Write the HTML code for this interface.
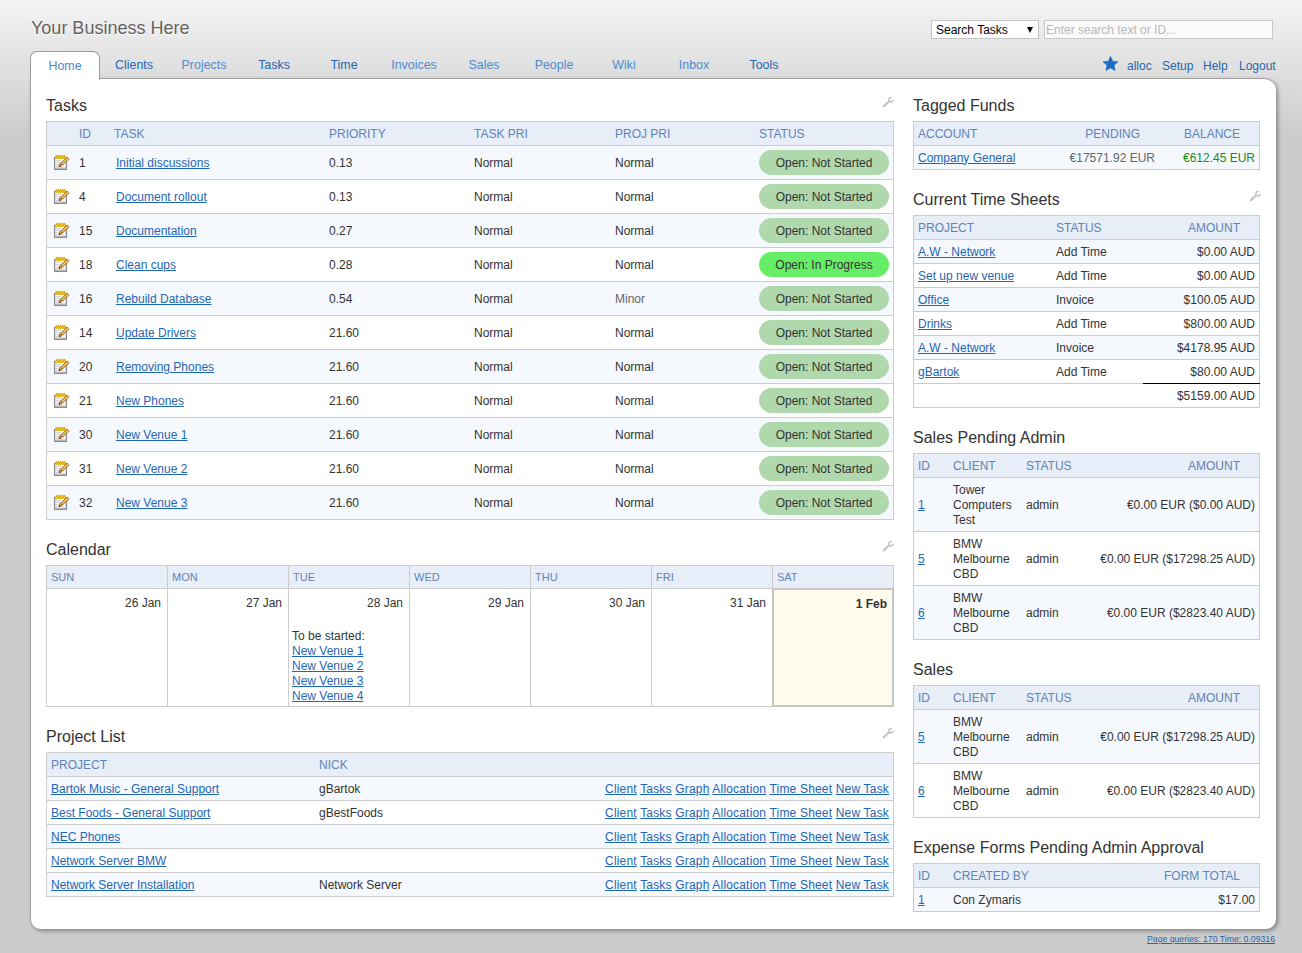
<!DOCTYPE html><html><head><meta charset="utf-8"><title>allocPSA</title><style>
*{box-sizing:border-box}
html,body{margin:0;padding:0}
body{width:1302px;height:953px;overflow:hidden;position:relative;font-family:"Liberation Sans",sans-serif;font-size:12px;color:#333;
background:linear-gradient(to bottom,#f4f4f4 0px,#cccccc 135px,#cccccc 953px);}
a{color:#1f66b5}
.abs{position:absolute}
#biz{position:absolute;left:31px;top:17px;font-size:18px;line-height:22px;color:#626262;white-space:nowrap;text-shadow:0 1px 1px #fff}
#sel{position:absolute;left:931px;top:20px;width:108px;height:19px;background:#fff;border:1px solid #c4c4c4;font-size:12px;line-height:19px;padding-left:4px;color:#000}
#sel .arr{position:absolute;left:95px;top:6px;width:0;height:0;border-left:3px solid transparent;border-right:3px solid transparent;border-top:6px solid #000}
#srch{position:absolute;left:1044px;top:20px;width:229px;height:19px;background:#fafafa;border:1px solid #c8c8c8;font-size:12px;line-height:19px;padding-left:1px;color:#b8b8b8;white-space:nowrap}
.tab{position:absolute;top:51px;width:70px;height:28px;text-align:center;font-size:12.4px;line-height:15px;padding-top:7px;white-space:nowrap}
.tab.dk{color:#2366b3}
.tab.lt{color:#4f8bce}
#home{left:30px;top:51px;width:70px;height:29px;background:#fff;border:1px solid #9a9a9a;border-bottom:none;border-radius:7px 7px 0 0;z-index:3;color:#4a86c8;padding-top:7px}
#box{position:absolute;left:30px;top:78px;width:1246px;height:851px;background:#fff;border-left:1px solid #a0a0a0;border-top:1px solid #a0a0a0;border-radius:0 12px 10px 10px;box-shadow:2px 2px 4px rgba(0,0,0,0.36);z-index:2}
#links{position:absolute;top:57px;left:1100px;font-size:12px;line-height:15px;white-space:nowrap}
#links span{position:absolute;color:#2a6ab5}
.ttl{position:absolute;font-size:16px;line-height:20px;color:#333;white-space:nowrap;z-index:4}
.wr{position:absolute;width:13px;height:13px;z-index:4}
.tbl{position:absolute;border:1px solid #cccccc;z-index:4;background:#fff}
.hd{position:relative;height:24px;background:#e7eef8;border-bottom:1px solid #cccccc}
.r{position:relative;border-bottom:1px solid #cccccc;background:#fff}
.r.o{background:#f5f9fe}
.r:last-child{border-bottom:none}
.c{position:absolute;top:1px;bottom:0;display:flex;align-items:center;white-space:nowrap;line-height:15px}
.hd .c{color:#5f84b6;font-size:12px}
.rt{justify-content:flex-end}
.pill{width:130px;height:25px;border-radius:12.5px;background:#afd8ad;color:#333;text-align:center;line-height:26px;font-size:12px;margin-top:-2px}
.pill.ip{background:#66ee66}
</style></head><body>
<div id="biz">Your Business Here</div>
<div id="sel">Search Tasks<span class="arr"></span></div>
<div id="srch">Enter search text or ID...</div>
<div id="home" class="tab">Home</div>
<div class="tab dk" style="left:99px">Clients</div>
<div class="tab lt" style="left:169px">Projects</div>
<div class="tab dk" style="left:239px">Tasks</div>
<div class="tab dk" style="left:309px">Time</div>
<div class="tab lt" style="left:379px">Invoices</div>
<div class="tab lt" style="left:449px">Sales</div>
<div class="tab lt" style="left:519px">People</div>
<div class="tab lt" style="left:589px">Wiki</div>
<div class="tab lt" style="left:659px">Inbox</div>
<div class="tab dk" style="left:729px">Tools</div>
<svg class="abs" style="left:1103px;top:56px" width="16" height="16" viewBox="0 0 16 16"><path d="M7.50 0.30 L9.67 5.21 L15.01 5.76 L11.02 9.34 L12.14 14.59 L7.50 11.90 L2.86 14.59 L3.98 9.34 L-0.01 5.76 L5.33 5.21Z" fill="#1a6cc4" stroke="#1a6cc4" stroke-width="0.6" stroke-linejoin="round"/></svg>
<span class="abs" style="left:1127px;top:59px;font-size:12px;line-height:15px;color:#2366b3">alloc</span>
<span class="abs" style="left:1162px;top:59px;font-size:12px;line-height:15px;color:#2366b3">Setup</span>
<span class="abs" style="left:1203px;top:59px;font-size:12px;line-height:15px;color:#2366b3">Help</span>
<span class="abs" style="left:1239px;top:59px;font-size:12px;line-height:15px;color:#2366b3">Logout</span>
<div id="box"></div>
<div class="ttl" style="left:46px;top:95.5px">Tasks</div>
<div class="wr" style="left:882px;top:96px"><svg width="13" height="13" viewBox="0 0 13 13"><path d="M1.7 10.3 L6.9 5.5" stroke="#c6c6c6" stroke-width="2.3" stroke-linecap="round"/><path d="M11.19 3.89 A2.2 2.2 0 1 1 9.93 1.71" stroke="#c6c6c6" stroke-width="1.6" fill="none"/></svg></div>
<div class="tbl" style="left:46px;top:121px;width:848px">
<div class="hd" style="height:24px">
<div class="c" style="left:32px;">ID</div>
<div class="c" style="left:67px;">TASK</div>
<div class="c" style="left:282px;">PRIORITY</div>
<div class="c" style="left:427px;">TASK PRI</div>
<div class="c" style="left:568px;">PROJ PRI</div>
<div class="c" style="left:712px;">STATUS</div>
</div>
<div class="r o" style="height:34px">
<div class="c" style="left:5px;display:block;width:20px"><div style="position:absolute;left:0;top:5px;width:20px;height:20px"><svg width="20" height="20" viewBox="0 0 20 20" style="position:absolute;left:0;top:0"><rect x="2.6" y="5.6" width="11.8" height="11.8" fill="#f6f6f6" stroke="#8c8c8c" stroke-width="1.3"/><rect x="3.3" y="15.6" width="10.4" height="1.2" fill="#b0b0b0"/><path d="M4 8.5h5M4 10.5h5M4 12.5h4M4 14.5h3" stroke="#cfcfcf" stroke-width="0.9"/><g fill="#dcae06"><ellipse cx="4.4" cy="4.9" rx="1.1" ry="2.1"/><ellipse cx="6.4" cy="4.9" rx="1.1" ry="2.1"/><ellipse cx="8.4" cy="4.9" rx="1.1" ry="2.1"/><ellipse cx="10.5" cy="4.9" rx="1.1" ry="2.1"/><ellipse cx="12.5" cy="4.9" rx="1.1" ry="2.1"/></g><g fill="#f3c870"><circle cx="4.4" cy="5.2" r="0.5"/><circle cx="6.4" cy="5.2" r="0.5"/><circle cx="8.4" cy="5.2" r="0.5"/><circle cx="10.5" cy="5.2" r="0.5"/><circle cx="12.5" cy="5.2" r="0.5"/></g><path d="M9.0 12.7 L16.4 5.8" stroke="#ad680a" stroke-width="3.1" stroke-linecap="butt"/><path d="M9.6 12.1 L16.0 6.2" stroke="#f3e0b2" stroke-width="1.2"/><path d="M10.06 13.83 L7.1 14.5 L7.94 11.57 Z" fill="#d9b070" stroke="#9a5a08" stroke-width="0.6" stroke-linejoin="round"/><circle cx="7.6" cy="14.0" r="0.8" fill="#111"/></svg></div></div>
<div class="c" style="left:32px;">1</div>
<div class="c" style="left:69px;"><a href="#">Initial discussions</a></div>
<div class="c" style="left:282px;">0.13</div>
<div class="c" style="left:427px;">Normal</div>
<div class="c" style="left:568px;">Normal</div>
<div class="c" style="left:712px;"><div class="pill">Open: Not Started</div></div>
</div>
<div class="r" style="height:34px">
<div class="c" style="left:5px;display:block;width:20px"><div style="position:absolute;left:0;top:5px;width:20px;height:20px"><svg width="20" height="20" viewBox="0 0 20 20" style="position:absolute;left:0;top:0"><rect x="2.6" y="5.6" width="11.8" height="11.8" fill="#f6f6f6" stroke="#8c8c8c" stroke-width="1.3"/><rect x="3.3" y="15.6" width="10.4" height="1.2" fill="#b0b0b0"/><path d="M4 8.5h5M4 10.5h5M4 12.5h4M4 14.5h3" stroke="#cfcfcf" stroke-width="0.9"/><g fill="#dcae06"><ellipse cx="4.4" cy="4.9" rx="1.1" ry="2.1"/><ellipse cx="6.4" cy="4.9" rx="1.1" ry="2.1"/><ellipse cx="8.4" cy="4.9" rx="1.1" ry="2.1"/><ellipse cx="10.5" cy="4.9" rx="1.1" ry="2.1"/><ellipse cx="12.5" cy="4.9" rx="1.1" ry="2.1"/></g><g fill="#f3c870"><circle cx="4.4" cy="5.2" r="0.5"/><circle cx="6.4" cy="5.2" r="0.5"/><circle cx="8.4" cy="5.2" r="0.5"/><circle cx="10.5" cy="5.2" r="0.5"/><circle cx="12.5" cy="5.2" r="0.5"/></g><path d="M9.0 12.7 L16.4 5.8" stroke="#ad680a" stroke-width="3.1" stroke-linecap="butt"/><path d="M9.6 12.1 L16.0 6.2" stroke="#f3e0b2" stroke-width="1.2"/><path d="M10.06 13.83 L7.1 14.5 L7.94 11.57 Z" fill="#d9b070" stroke="#9a5a08" stroke-width="0.6" stroke-linejoin="round"/><circle cx="7.6" cy="14.0" r="0.8" fill="#111"/></svg></div></div>
<div class="c" style="left:32px;">4</div>
<div class="c" style="left:69px;"><a href="#">Document rollout</a></div>
<div class="c" style="left:282px;">0.13</div>
<div class="c" style="left:427px;">Normal</div>
<div class="c" style="left:568px;">Normal</div>
<div class="c" style="left:712px;"><div class="pill">Open: Not Started</div></div>
</div>
<div class="r o" style="height:34px">
<div class="c" style="left:5px;display:block;width:20px"><div style="position:absolute;left:0;top:5px;width:20px;height:20px"><svg width="20" height="20" viewBox="0 0 20 20" style="position:absolute;left:0;top:0"><rect x="2.6" y="5.6" width="11.8" height="11.8" fill="#f6f6f6" stroke="#8c8c8c" stroke-width="1.3"/><rect x="3.3" y="15.6" width="10.4" height="1.2" fill="#b0b0b0"/><path d="M4 8.5h5M4 10.5h5M4 12.5h4M4 14.5h3" stroke="#cfcfcf" stroke-width="0.9"/><g fill="#dcae06"><ellipse cx="4.4" cy="4.9" rx="1.1" ry="2.1"/><ellipse cx="6.4" cy="4.9" rx="1.1" ry="2.1"/><ellipse cx="8.4" cy="4.9" rx="1.1" ry="2.1"/><ellipse cx="10.5" cy="4.9" rx="1.1" ry="2.1"/><ellipse cx="12.5" cy="4.9" rx="1.1" ry="2.1"/></g><g fill="#f3c870"><circle cx="4.4" cy="5.2" r="0.5"/><circle cx="6.4" cy="5.2" r="0.5"/><circle cx="8.4" cy="5.2" r="0.5"/><circle cx="10.5" cy="5.2" r="0.5"/><circle cx="12.5" cy="5.2" r="0.5"/></g><path d="M9.0 12.7 L16.4 5.8" stroke="#ad680a" stroke-width="3.1" stroke-linecap="butt"/><path d="M9.6 12.1 L16.0 6.2" stroke="#f3e0b2" stroke-width="1.2"/><path d="M10.06 13.83 L7.1 14.5 L7.94 11.57 Z" fill="#d9b070" stroke="#9a5a08" stroke-width="0.6" stroke-linejoin="round"/><circle cx="7.6" cy="14.0" r="0.8" fill="#111"/></svg></div></div>
<div class="c" style="left:32px;">15</div>
<div class="c" style="left:69px;"><a href="#">Documentation</a></div>
<div class="c" style="left:282px;">0.27</div>
<div class="c" style="left:427px;">Normal</div>
<div class="c" style="left:568px;">Normal</div>
<div class="c" style="left:712px;"><div class="pill">Open: Not Started</div></div>
</div>
<div class="r" style="height:34px">
<div class="c" style="left:5px;display:block;width:20px"><div style="position:absolute;left:0;top:5px;width:20px;height:20px"><svg width="20" height="20" viewBox="0 0 20 20" style="position:absolute;left:0;top:0"><rect x="2.6" y="5.6" width="11.8" height="11.8" fill="#f6f6f6" stroke="#8c8c8c" stroke-width="1.3"/><rect x="3.3" y="15.6" width="10.4" height="1.2" fill="#b0b0b0"/><path d="M4 8.5h5M4 10.5h5M4 12.5h4M4 14.5h3" stroke="#cfcfcf" stroke-width="0.9"/><g fill="#dcae06"><ellipse cx="4.4" cy="4.9" rx="1.1" ry="2.1"/><ellipse cx="6.4" cy="4.9" rx="1.1" ry="2.1"/><ellipse cx="8.4" cy="4.9" rx="1.1" ry="2.1"/><ellipse cx="10.5" cy="4.9" rx="1.1" ry="2.1"/><ellipse cx="12.5" cy="4.9" rx="1.1" ry="2.1"/></g><g fill="#f3c870"><circle cx="4.4" cy="5.2" r="0.5"/><circle cx="6.4" cy="5.2" r="0.5"/><circle cx="8.4" cy="5.2" r="0.5"/><circle cx="10.5" cy="5.2" r="0.5"/><circle cx="12.5" cy="5.2" r="0.5"/></g><path d="M9.0 12.7 L16.4 5.8" stroke="#ad680a" stroke-width="3.1" stroke-linecap="butt"/><path d="M9.6 12.1 L16.0 6.2" stroke="#f3e0b2" stroke-width="1.2"/><path d="M10.06 13.83 L7.1 14.5 L7.94 11.57 Z" fill="#d9b070" stroke="#9a5a08" stroke-width="0.6" stroke-linejoin="round"/><circle cx="7.6" cy="14.0" r="0.8" fill="#111"/></svg></div></div>
<div class="c" style="left:32px;">18</div>
<div class="c" style="left:69px;"><a href="#">Clean cups</a></div>
<div class="c" style="left:282px;">0.28</div>
<div class="c" style="left:427px;">Normal</div>
<div class="c" style="left:568px;">Normal</div>
<div class="c" style="left:712px;"><div class="pill ip">Open: In Progress</div></div>
</div>
<div class="r o" style="height:34px">
<div class="c" style="left:5px;display:block;width:20px"><div style="position:absolute;left:0;top:5px;width:20px;height:20px"><svg width="20" height="20" viewBox="0 0 20 20" style="position:absolute;left:0;top:0"><rect x="2.6" y="5.6" width="11.8" height="11.8" fill="#f6f6f6" stroke="#8c8c8c" stroke-width="1.3"/><rect x="3.3" y="15.6" width="10.4" height="1.2" fill="#b0b0b0"/><path d="M4 8.5h5M4 10.5h5M4 12.5h4M4 14.5h3" stroke="#cfcfcf" stroke-width="0.9"/><g fill="#dcae06"><ellipse cx="4.4" cy="4.9" rx="1.1" ry="2.1"/><ellipse cx="6.4" cy="4.9" rx="1.1" ry="2.1"/><ellipse cx="8.4" cy="4.9" rx="1.1" ry="2.1"/><ellipse cx="10.5" cy="4.9" rx="1.1" ry="2.1"/><ellipse cx="12.5" cy="4.9" rx="1.1" ry="2.1"/></g><g fill="#f3c870"><circle cx="4.4" cy="5.2" r="0.5"/><circle cx="6.4" cy="5.2" r="0.5"/><circle cx="8.4" cy="5.2" r="0.5"/><circle cx="10.5" cy="5.2" r="0.5"/><circle cx="12.5" cy="5.2" r="0.5"/></g><path d="M9.0 12.7 L16.4 5.8" stroke="#ad680a" stroke-width="3.1" stroke-linecap="butt"/><path d="M9.6 12.1 L16.0 6.2" stroke="#f3e0b2" stroke-width="1.2"/><path d="M10.06 13.83 L7.1 14.5 L7.94 11.57 Z" fill="#d9b070" stroke="#9a5a08" stroke-width="0.6" stroke-linejoin="round"/><circle cx="7.6" cy="14.0" r="0.8" fill="#111"/></svg></div></div>
<div class="c" style="left:32px;">16</div>
<div class="c" style="left:69px;"><a href="#">Rebuild Database</a></div>
<div class="c" style="left:282px;">0.54</div>
<div class="c" style="left:427px;">Normal</div>
<div class="c" style="left:568px;color:#666">Minor</div>
<div class="c" style="left:712px;"><div class="pill">Open: Not Started</div></div>
</div>
<div class="r" style="height:34px">
<div class="c" style="left:5px;display:block;width:20px"><div style="position:absolute;left:0;top:5px;width:20px;height:20px"><svg width="20" height="20" viewBox="0 0 20 20" style="position:absolute;left:0;top:0"><rect x="2.6" y="5.6" width="11.8" height="11.8" fill="#f6f6f6" stroke="#8c8c8c" stroke-width="1.3"/><rect x="3.3" y="15.6" width="10.4" height="1.2" fill="#b0b0b0"/><path d="M4 8.5h5M4 10.5h5M4 12.5h4M4 14.5h3" stroke="#cfcfcf" stroke-width="0.9"/><g fill="#dcae06"><ellipse cx="4.4" cy="4.9" rx="1.1" ry="2.1"/><ellipse cx="6.4" cy="4.9" rx="1.1" ry="2.1"/><ellipse cx="8.4" cy="4.9" rx="1.1" ry="2.1"/><ellipse cx="10.5" cy="4.9" rx="1.1" ry="2.1"/><ellipse cx="12.5" cy="4.9" rx="1.1" ry="2.1"/></g><g fill="#f3c870"><circle cx="4.4" cy="5.2" r="0.5"/><circle cx="6.4" cy="5.2" r="0.5"/><circle cx="8.4" cy="5.2" r="0.5"/><circle cx="10.5" cy="5.2" r="0.5"/><circle cx="12.5" cy="5.2" r="0.5"/></g><path d="M9.0 12.7 L16.4 5.8" stroke="#ad680a" stroke-width="3.1" stroke-linecap="butt"/><path d="M9.6 12.1 L16.0 6.2" stroke="#f3e0b2" stroke-width="1.2"/><path d="M10.06 13.83 L7.1 14.5 L7.94 11.57 Z" fill="#d9b070" stroke="#9a5a08" stroke-width="0.6" stroke-linejoin="round"/><circle cx="7.6" cy="14.0" r="0.8" fill="#111"/></svg></div></div>
<div class="c" style="left:32px;">14</div>
<div class="c" style="left:69px;"><a href="#">Update Drivers</a></div>
<div class="c" style="left:282px;">21.60</div>
<div class="c" style="left:427px;">Normal</div>
<div class="c" style="left:568px;">Normal</div>
<div class="c" style="left:712px;"><div class="pill">Open: Not Started</div></div>
</div>
<div class="r o" style="height:34px">
<div class="c" style="left:5px;display:block;width:20px"><div style="position:absolute;left:0;top:5px;width:20px;height:20px"><svg width="20" height="20" viewBox="0 0 20 20" style="position:absolute;left:0;top:0"><rect x="2.6" y="5.6" width="11.8" height="11.8" fill="#f6f6f6" stroke="#8c8c8c" stroke-width="1.3"/><rect x="3.3" y="15.6" width="10.4" height="1.2" fill="#b0b0b0"/><path d="M4 8.5h5M4 10.5h5M4 12.5h4M4 14.5h3" stroke="#cfcfcf" stroke-width="0.9"/><g fill="#dcae06"><ellipse cx="4.4" cy="4.9" rx="1.1" ry="2.1"/><ellipse cx="6.4" cy="4.9" rx="1.1" ry="2.1"/><ellipse cx="8.4" cy="4.9" rx="1.1" ry="2.1"/><ellipse cx="10.5" cy="4.9" rx="1.1" ry="2.1"/><ellipse cx="12.5" cy="4.9" rx="1.1" ry="2.1"/></g><g fill="#f3c870"><circle cx="4.4" cy="5.2" r="0.5"/><circle cx="6.4" cy="5.2" r="0.5"/><circle cx="8.4" cy="5.2" r="0.5"/><circle cx="10.5" cy="5.2" r="0.5"/><circle cx="12.5" cy="5.2" r="0.5"/></g><path d="M9.0 12.7 L16.4 5.8" stroke="#ad680a" stroke-width="3.1" stroke-linecap="butt"/><path d="M9.6 12.1 L16.0 6.2" stroke="#f3e0b2" stroke-width="1.2"/><path d="M10.06 13.83 L7.1 14.5 L7.94 11.57 Z" fill="#d9b070" stroke="#9a5a08" stroke-width="0.6" stroke-linejoin="round"/><circle cx="7.6" cy="14.0" r="0.8" fill="#111"/></svg></div></div>
<div class="c" style="left:32px;">20</div>
<div class="c" style="left:69px;"><a href="#">Removing Phones</a></div>
<div class="c" style="left:282px;">21.60</div>
<div class="c" style="left:427px;">Normal</div>
<div class="c" style="left:568px;">Normal</div>
<div class="c" style="left:712px;"><div class="pill">Open: Not Started</div></div>
</div>
<div class="r" style="height:34px">
<div class="c" style="left:5px;display:block;width:20px"><div style="position:absolute;left:0;top:5px;width:20px;height:20px"><svg width="20" height="20" viewBox="0 0 20 20" style="position:absolute;left:0;top:0"><rect x="2.6" y="5.6" width="11.8" height="11.8" fill="#f6f6f6" stroke="#8c8c8c" stroke-width="1.3"/><rect x="3.3" y="15.6" width="10.4" height="1.2" fill="#b0b0b0"/><path d="M4 8.5h5M4 10.5h5M4 12.5h4M4 14.5h3" stroke="#cfcfcf" stroke-width="0.9"/><g fill="#dcae06"><ellipse cx="4.4" cy="4.9" rx="1.1" ry="2.1"/><ellipse cx="6.4" cy="4.9" rx="1.1" ry="2.1"/><ellipse cx="8.4" cy="4.9" rx="1.1" ry="2.1"/><ellipse cx="10.5" cy="4.9" rx="1.1" ry="2.1"/><ellipse cx="12.5" cy="4.9" rx="1.1" ry="2.1"/></g><g fill="#f3c870"><circle cx="4.4" cy="5.2" r="0.5"/><circle cx="6.4" cy="5.2" r="0.5"/><circle cx="8.4" cy="5.2" r="0.5"/><circle cx="10.5" cy="5.2" r="0.5"/><circle cx="12.5" cy="5.2" r="0.5"/></g><path d="M9.0 12.7 L16.4 5.8" stroke="#ad680a" stroke-width="3.1" stroke-linecap="butt"/><path d="M9.6 12.1 L16.0 6.2" stroke="#f3e0b2" stroke-width="1.2"/><path d="M10.06 13.83 L7.1 14.5 L7.94 11.57 Z" fill="#d9b070" stroke="#9a5a08" stroke-width="0.6" stroke-linejoin="round"/><circle cx="7.6" cy="14.0" r="0.8" fill="#111"/></svg></div></div>
<div class="c" style="left:32px;">21</div>
<div class="c" style="left:69px;"><a href="#">New Phones</a></div>
<div class="c" style="left:282px;">21.60</div>
<div class="c" style="left:427px;">Normal</div>
<div class="c" style="left:568px;">Normal</div>
<div class="c" style="left:712px;"><div class="pill">Open: Not Started</div></div>
</div>
<div class="r o" style="height:34px">
<div class="c" style="left:5px;display:block;width:20px"><div style="position:absolute;left:0;top:5px;width:20px;height:20px"><svg width="20" height="20" viewBox="0 0 20 20" style="position:absolute;left:0;top:0"><rect x="2.6" y="5.6" width="11.8" height="11.8" fill="#f6f6f6" stroke="#8c8c8c" stroke-width="1.3"/><rect x="3.3" y="15.6" width="10.4" height="1.2" fill="#b0b0b0"/><path d="M4 8.5h5M4 10.5h5M4 12.5h4M4 14.5h3" stroke="#cfcfcf" stroke-width="0.9"/><g fill="#dcae06"><ellipse cx="4.4" cy="4.9" rx="1.1" ry="2.1"/><ellipse cx="6.4" cy="4.9" rx="1.1" ry="2.1"/><ellipse cx="8.4" cy="4.9" rx="1.1" ry="2.1"/><ellipse cx="10.5" cy="4.9" rx="1.1" ry="2.1"/><ellipse cx="12.5" cy="4.9" rx="1.1" ry="2.1"/></g><g fill="#f3c870"><circle cx="4.4" cy="5.2" r="0.5"/><circle cx="6.4" cy="5.2" r="0.5"/><circle cx="8.4" cy="5.2" r="0.5"/><circle cx="10.5" cy="5.2" r="0.5"/><circle cx="12.5" cy="5.2" r="0.5"/></g><path d="M9.0 12.7 L16.4 5.8" stroke="#ad680a" stroke-width="3.1" stroke-linecap="butt"/><path d="M9.6 12.1 L16.0 6.2" stroke="#f3e0b2" stroke-width="1.2"/><path d="M10.06 13.83 L7.1 14.5 L7.94 11.57 Z" fill="#d9b070" stroke="#9a5a08" stroke-width="0.6" stroke-linejoin="round"/><circle cx="7.6" cy="14.0" r="0.8" fill="#111"/></svg></div></div>
<div class="c" style="left:32px;">30</div>
<div class="c" style="left:69px;"><a href="#">New Venue 1</a></div>
<div class="c" style="left:282px;">21.60</div>
<div class="c" style="left:427px;">Normal</div>
<div class="c" style="left:568px;">Normal</div>
<div class="c" style="left:712px;"><div class="pill">Open: Not Started</div></div>
</div>
<div class="r" style="height:34px">
<div class="c" style="left:5px;display:block;width:20px"><div style="position:absolute;left:0;top:5px;width:20px;height:20px"><svg width="20" height="20" viewBox="0 0 20 20" style="position:absolute;left:0;top:0"><rect x="2.6" y="5.6" width="11.8" height="11.8" fill="#f6f6f6" stroke="#8c8c8c" stroke-width="1.3"/><rect x="3.3" y="15.6" width="10.4" height="1.2" fill="#b0b0b0"/><path d="M4 8.5h5M4 10.5h5M4 12.5h4M4 14.5h3" stroke="#cfcfcf" stroke-width="0.9"/><g fill="#dcae06"><ellipse cx="4.4" cy="4.9" rx="1.1" ry="2.1"/><ellipse cx="6.4" cy="4.9" rx="1.1" ry="2.1"/><ellipse cx="8.4" cy="4.9" rx="1.1" ry="2.1"/><ellipse cx="10.5" cy="4.9" rx="1.1" ry="2.1"/><ellipse cx="12.5" cy="4.9" rx="1.1" ry="2.1"/></g><g fill="#f3c870"><circle cx="4.4" cy="5.2" r="0.5"/><circle cx="6.4" cy="5.2" r="0.5"/><circle cx="8.4" cy="5.2" r="0.5"/><circle cx="10.5" cy="5.2" r="0.5"/><circle cx="12.5" cy="5.2" r="0.5"/></g><path d="M9.0 12.7 L16.4 5.8" stroke="#ad680a" stroke-width="3.1" stroke-linecap="butt"/><path d="M9.6 12.1 L16.0 6.2" stroke="#f3e0b2" stroke-width="1.2"/><path d="M10.06 13.83 L7.1 14.5 L7.94 11.57 Z" fill="#d9b070" stroke="#9a5a08" stroke-width="0.6" stroke-linejoin="round"/><circle cx="7.6" cy="14.0" r="0.8" fill="#111"/></svg></div></div>
<div class="c" style="left:32px;">31</div>
<div class="c" style="left:69px;"><a href="#">New Venue 2</a></div>
<div class="c" style="left:282px;">21.60</div>
<div class="c" style="left:427px;">Normal</div>
<div class="c" style="left:568px;">Normal</div>
<div class="c" style="left:712px;"><div class="pill">Open: Not Started</div></div>
</div>
<div class="r o" style="height:33px">
<div class="c" style="left:5px;display:block;width:20px"><div style="position:absolute;left:0;top:5px;width:20px;height:20px"><svg width="20" height="20" viewBox="0 0 20 20" style="position:absolute;left:0;top:0"><rect x="2.6" y="5.6" width="11.8" height="11.8" fill="#f6f6f6" stroke="#8c8c8c" stroke-width="1.3"/><rect x="3.3" y="15.6" width="10.4" height="1.2" fill="#b0b0b0"/><path d="M4 8.5h5M4 10.5h5M4 12.5h4M4 14.5h3" stroke="#cfcfcf" stroke-width="0.9"/><g fill="#dcae06"><ellipse cx="4.4" cy="4.9" rx="1.1" ry="2.1"/><ellipse cx="6.4" cy="4.9" rx="1.1" ry="2.1"/><ellipse cx="8.4" cy="4.9" rx="1.1" ry="2.1"/><ellipse cx="10.5" cy="4.9" rx="1.1" ry="2.1"/><ellipse cx="12.5" cy="4.9" rx="1.1" ry="2.1"/></g><g fill="#f3c870"><circle cx="4.4" cy="5.2" r="0.5"/><circle cx="6.4" cy="5.2" r="0.5"/><circle cx="8.4" cy="5.2" r="0.5"/><circle cx="10.5" cy="5.2" r="0.5"/><circle cx="12.5" cy="5.2" r="0.5"/></g><path d="M9.0 12.7 L16.4 5.8" stroke="#ad680a" stroke-width="3.1" stroke-linecap="butt"/><path d="M9.6 12.1 L16.0 6.2" stroke="#f3e0b2" stroke-width="1.2"/><path d="M10.06 13.83 L7.1 14.5 L7.94 11.57 Z" fill="#d9b070" stroke="#9a5a08" stroke-width="0.6" stroke-linejoin="round"/><circle cx="7.6" cy="14.0" r="0.8" fill="#111"/></svg></div></div>
<div class="c" style="left:32px;">32</div>
<div class="c" style="left:69px;"><a href="#">New Venue 3</a></div>
<div class="c" style="left:282px;">21.60</div>
<div class="c" style="left:427px;">Normal</div>
<div class="c" style="left:568px;">Normal</div>
<div class="c" style="left:712px;"><div class="pill">Open: Not Started</div></div>
</div>
</div>
<div class="ttl" style="left:46px;top:539.5px">Calendar</div>
<div class="wr" style="left:882px;top:540px"><svg width="13" height="13" viewBox="0 0 13 13"><path d="M1.7 10.3 L6.9 5.5" stroke="#c6c6c6" stroke-width="2.3" stroke-linecap="round"/><path d="M11.19 3.89 A2.2 2.2 0 1 1 9.93 1.71" stroke="#c6c6c6" stroke-width="1.6" fill="none"/></svg></div>
<div class="tbl" style="left:46px;top:565px;width:848px;height:142px">
<div class="hd" style="height:23px"></div>
</div>
<div class="abs" style="left:51px;top:571px;font-size:11px;line-height:13px;color:#5f84b6;z-index:5">SUN</div>
<div class="abs" style="left:46px;top:596px;width:115px;text-align:right;line-height:15px;z-index:5">26 Jan</div>
<div class="abs" style="left:172px;top:571px;font-size:11px;line-height:13px;color:#5f84b6;z-index:5">MON</div>
<div class="abs" style="left:167px;top:565px;width:1px;height:142px;background:#cccccc;z-index:5"></div>
<div class="abs" style="left:167px;top:596px;width:115px;text-align:right;line-height:15px;z-index:5">27 Jan</div>
<div class="abs" style="left:293px;top:571px;font-size:11px;line-height:13px;color:#5f84b6;z-index:5">TUE</div>
<div class="abs" style="left:288px;top:565px;width:1px;height:142px;background:#cccccc;z-index:5"></div>
<div class="abs" style="left:288px;top:596px;width:115px;text-align:right;line-height:15px;z-index:5">28 Jan</div>
<div class="abs" style="left:414px;top:571px;font-size:11px;line-height:13px;color:#5f84b6;z-index:5">WED</div>
<div class="abs" style="left:409px;top:565px;width:1px;height:142px;background:#cccccc;z-index:5"></div>
<div class="abs" style="left:409px;top:596px;width:115px;text-align:right;line-height:15px;z-index:5">29 Jan</div>
<div class="abs" style="left:535px;top:571px;font-size:11px;line-height:13px;color:#5f84b6;z-index:5">THU</div>
<div class="abs" style="left:530px;top:565px;width:1px;height:142px;background:#cccccc;z-index:5"></div>
<div class="abs" style="left:530px;top:596px;width:115px;text-align:right;line-height:15px;z-index:5">30 Jan</div>
<div class="abs" style="left:656px;top:571px;font-size:11px;line-height:13px;color:#5f84b6;z-index:5">FRI</div>
<div class="abs" style="left:651px;top:565px;width:1px;height:142px;background:#cccccc;z-index:5"></div>
<div class="abs" style="left:651px;top:596px;width:115px;text-align:right;line-height:15px;z-index:5">31 Jan</div>
<div class="abs" style="left:777px;top:571px;font-size:11px;line-height:13px;color:#5f84b6;z-index:5">SAT</div>
<div class="abs" style="left:772px;top:565px;width:1px;height:142px;background:#cccccc;z-index:5"></div>
<div class="abs" style="left:772px;top:588px;width:122px;height:119px;background:#fffcee;border:2px solid #c6c6c6;z-index:5"></div>
<div class="abs" style="left:772px;top:597px;width:115px;text-align:right;line-height:15px;font-weight:bold;z-index:6">1 Feb</div>
<div class="abs" style="left:292px;top:629px;line-height:15px;z-index:6;white-space:nowrap">To be started:<br><a href="#">New Venue 1</a><br><a href="#">New Venue 2</a><br><a href="#">New Venue 3</a><br><a href="#">New Venue 4</a></div>
<div class="ttl" style="left:46px;top:726.5px">Project List</div>
<div class="wr" style="left:882px;top:727px"><svg width="13" height="13" viewBox="0 0 13 13"><path d="M1.7 10.3 L6.9 5.5" stroke="#c6c6c6" stroke-width="2.3" stroke-linecap="round"/><path d="M11.19 3.89 A2.2 2.2 0 1 1 9.93 1.71" stroke="#c6c6c6" stroke-width="1.6" fill="none"/></svg></div>
<div class="tbl" style="left:46px;top:752px;width:848px">
<div class="hd" style="height:24px">
<div class="c" style="left:4px;">PROJECT</div>
<div class="c" style="left:272px;">NICK</div>
</div>
<div class="r o" style="height:24px">
<div class="c" style="left:4px;"><a href="#">Bartok Music - General Support</a></div>
<div class="c" style="left:272px;">gBartok</div>
<div class="c rt" style="right:4px;"><span style="letter-spacing:0.18px"><a href="#">Client</a> <a href="#">Tasks</a> <a href="#">Graph</a> <a href="#">Allocation</a> <a href="#">Time Sheet</a> <a href="#">New Task</a></span></div>
</div>
<div class="r" style="height:24px">
<div class="c" style="left:4px;"><a href="#">Best Foods - General Support</a></div>
<div class="c" style="left:272px;">gBestFoods</div>
<div class="c rt" style="right:4px;"><span style="letter-spacing:0.18px"><a href="#">Client</a> <a href="#">Tasks</a> <a href="#">Graph</a> <a href="#">Allocation</a> <a href="#">Time Sheet</a> <a href="#">New Task</a></span></div>
</div>
<div class="r o" style="height:24px">
<div class="c" style="left:4px;"><a href="#">NEC Phones</a></div>
<div class="c" style="left:272px;"></div>
<div class="c rt" style="right:4px;"><span style="letter-spacing:0.18px"><a href="#">Client</a> <a href="#">Tasks</a> <a href="#">Graph</a> <a href="#">Allocation</a> <a href="#">Time Sheet</a> <a href="#">New Task</a></span></div>
</div>
<div class="r" style="height:24px">
<div class="c" style="left:4px;"><a href="#">Network Server BMW</a></div>
<div class="c" style="left:272px;"></div>
<div class="c rt" style="right:4px;"><span style="letter-spacing:0.18px"><a href="#">Client</a> <a href="#">Tasks</a> <a href="#">Graph</a> <a href="#">Allocation</a> <a href="#">Time Sheet</a> <a href="#">New Task</a></span></div>
</div>
<div class="r o" style="height:23px">
<div class="c" style="left:4px;"><a href="#">Network Server Installation</a></div>
<div class="c" style="left:272px;">Network Server</div>
<div class="c rt" style="right:4px;"><span style="letter-spacing:0.18px"><a href="#">Client</a> <a href="#">Tasks</a> <a href="#">Graph</a> <a href="#">Allocation</a> <a href="#">Time Sheet</a> <a href="#">New Task</a></span></div>
</div>
</div>
<div class="ttl" style="left:913px;top:95.5px">Tagged Funds</div>
<div class="tbl" style="left:913px;top:121px;width:347px">
<div class="hd" style="height:24px">
<div class="c" style="left:4px;">ACCOUNT</div>
<div class="c rt" style="right:119px;">PENDING</div>
<div class="c rt" style="right:19px;">BALANCE</div>
</div>
<div class="r o" style="height:23px">
<div class="c" style="left:4px;"><a href="#">Company General</a></div>
<div class="c rt" style="right:104px;"><span style="color:#666">€17571.92 EUR</span></div>
<div class="c rt" style="right:4px;"><span style="color:#1a8a1a">€612.45 EUR</span></div>
</div>
</div>
<div class="ttl" style="left:913px;top:189.5px">Current Time Sheets</div>
<div class="wr" style="left:1249px;top:190px"><svg width="13" height="13" viewBox="0 0 13 13"><path d="M1.7 10.3 L6.9 5.5" stroke="#c6c6c6" stroke-width="2.3" stroke-linecap="round"/><path d="M11.19 3.89 A2.2 2.2 0 1 1 9.93 1.71" stroke="#c6c6c6" stroke-width="1.6" fill="none"/></svg></div>
<div class="tbl" style="left:913px;top:215px;width:347px">
<div class="hd" style="height:24px">
<div class="c" style="left:4px;">PROJECT</div>
<div class="c" style="left:142px;">STATUS</div>
<div class="c rt" style="right:19px;">AMOUNT</div>
</div>
<div class="r o" style="height:24px">
<div class="c" style="left:4px;"><a href="#">A.W - Network</a></div>
<div class="c" style="left:142px;">Add Time</div>
<div class="c rt" style="right:4px;">$0.00 AUD</div>
</div>
<div class="r" style="height:24px">
<div class="c" style="left:4px;"><a href="#">Set up new venue</a></div>
<div class="c" style="left:142px;">Add Time</div>
<div class="c rt" style="right:4px;">$0.00 AUD</div>
</div>
<div class="r o" style="height:24px">
<div class="c" style="left:4px;"><a href="#">Office</a></div>
<div class="c" style="left:142px;">Invoice</div>
<div class="c rt" style="right:4px;">$100.05 AUD</div>
</div>
<div class="r" style="height:24px">
<div class="c" style="left:4px;"><a href="#">Drinks</a></div>
<div class="c" style="left:142px;">Add Time</div>
<div class="c rt" style="right:4px;">$800.00 AUD</div>
</div>
<div class="r o" style="height:24px">
<div class="c" style="left:4px;"><a href="#">A.W - Network</a></div>
<div class="c" style="left:142px;">Invoice</div>
<div class="c rt" style="right:4px;">$4178.95 AUD</div>
</div>
<div class="r" style="height:24px">
<div class="c" style="left:4px;"><a href="#">gBartok</a></div>
<div class="c" style="left:142px;">Add Time</div>
<div class="c rt" style="right:4px;">$80.00 AUD</div>
</div>
<div class="r" style="height:23px">
<div class="c rt" style="right:4px;">$5159.00 AUD</div>
</div>
</div>
<div class="abs" style="left:1143px;top:383px;width:117px;height:1px;background:#000;z-index:6"></div>
<div class="ttl" style="left:913px;top:427.5px">Sales Pending Admin</div>
<div class="tbl" style="left:913px;top:453px;width:347px">
<div class="hd" style="height:24px">
<div class="c" style="left:4px;">ID</div>
<div class="c" style="left:39px;">CLIENT</div>
<div class="c" style="left:112px;">STATUS</div>
<div class="c rt" style="right:19px;">AMOUNT</div>
</div>
<div class="r o" style="height:54px">
<div class="c" style="left:4px;"><a href="#">1</a></div>
<div class="c" style="left:39px;">Tower<br>Computers<br>Test</div>
<div class="c" style="left:112px;">admin</div>
<div class="c rt" style="right:4px;">€0.00 EUR ($0.00 AUD)</div>
</div>
<div class="r" style="height:54px">
<div class="c" style="left:4px;"><a href="#">5</a></div>
<div class="c" style="left:39px;">BMW<br>Melbourne<br>CBD</div>
<div class="c" style="left:112px;">admin</div>
<div class="c rt" style="right:4px;">€0.00 EUR ($17298.25 AUD)</div>
</div>
<div class="r o" style="height:53px">
<div class="c" style="left:4px;"><a href="#">6</a></div>
<div class="c" style="left:39px;">BMW<br>Melbourne<br>CBD</div>
<div class="c" style="left:112px;">admin</div>
<div class="c rt" style="right:4px;">€0.00 EUR ($2823.40 AUD)</div>
</div>
</div>
<div class="ttl" style="left:913px;top:659.5px">Sales</div>
<div class="tbl" style="left:913px;top:685px;width:347px">
<div class="hd" style="height:24px">
<div class="c" style="left:4px;">ID</div>
<div class="c" style="left:39px;">CLIENT</div>
<div class="c" style="left:112px;">STATUS</div>
<div class="c rt" style="right:19px;">AMOUNT</div>
</div>
<div class="r o" style="height:54px">
<div class="c" style="left:4px;"><a href="#">5</a></div>
<div class="c" style="left:39px;">BMW<br>Melbourne<br>CBD</div>
<div class="c" style="left:112px;">admin</div>
<div class="c rt" style="right:4px;">€0.00 EUR ($17298.25 AUD)</div>
</div>
<div class="r" style="height:53px">
<div class="c" style="left:4px;"><a href="#">6</a></div>
<div class="c" style="left:39px;">BMW<br>Melbourne<br>CBD</div>
<div class="c" style="left:112px;">admin</div>
<div class="c rt" style="right:4px;">€0.00 EUR ($2823.40 AUD)</div>
</div>
</div>
<div class="ttl" style="left:913px;top:837.5px">Expense Forms Pending Admin Approval</div>
<div class="tbl" style="left:913px;top:863px;width:347px">
<div class="hd" style="height:24px">
<div class="c" style="left:4px;">ID</div>
<div class="c" style="left:39px;">CREATED BY</div>
<div class="c rt" style="right:19px;">FORM TOTAL</div>
</div>
<div class="r o" style="height:23px">
<div class="c" style="left:4px;"><a href="#">1</a></div>
<div class="c" style="left:39px;">Con Zymaris</div>
<div class="c rt" style="right:4px;">$17.00</div>
</div>
</div>
<a href="#" class="abs" style="left:1147px;top:934px;font-size:8.7px;line-height:11px;white-space:nowrap;color:#2366b3">Page queries: 170 Time: 0.09316</a>
</body></html>
